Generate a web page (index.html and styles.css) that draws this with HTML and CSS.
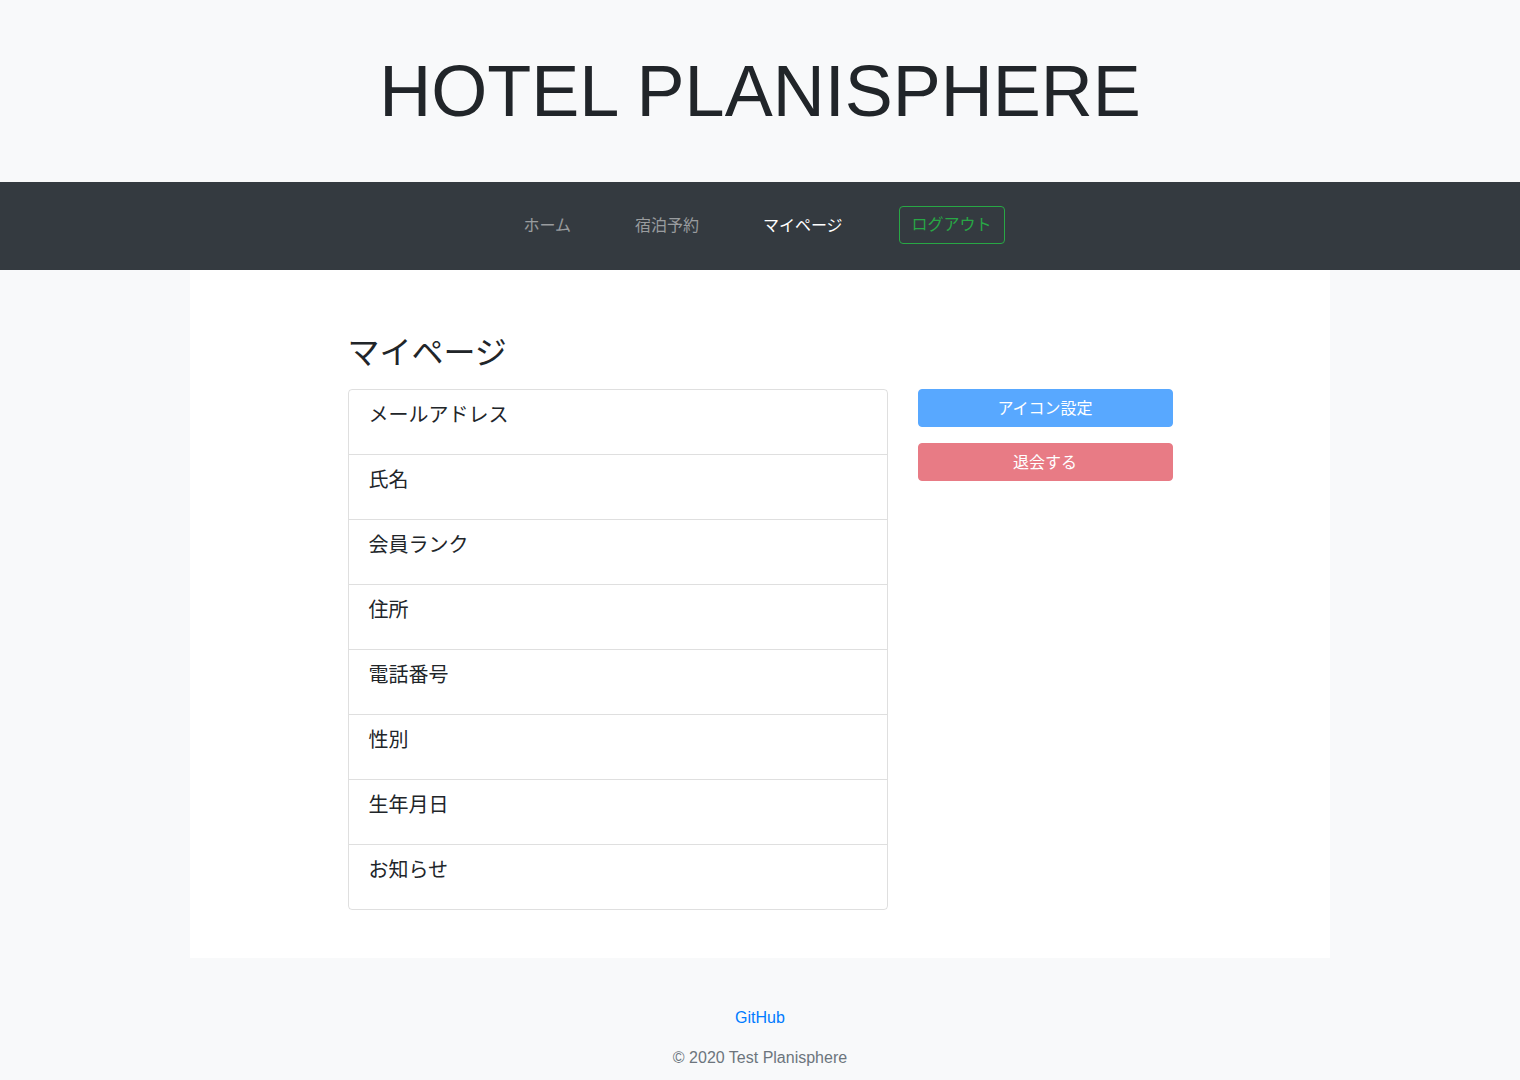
FILE: index.html
```html
<!DOCTYPE html>
<html lang="ja">
<head>
<meta charset="utf-8">
<title>マイページ | HOTEL PLANISPHERE</title>
<link rel="stylesheet" href="styles.css">
</head>
<body>
<header class="jumbotron">
  <h1 class="brand">HOTEL PLANISPHERE</h1>
</header>
<nav class="navbar">
  <ul class="nav-list">
    <li class="nav-item"><a class="nav-link" href="#">ホーム</a></li>
    <li class="nav-item"><a class="nav-link" href="#">宿泊予約</a></li>
    <li class="nav-item"><a class="nav-link active" href="#">マイページ</a></li>
    <li class="nav-item nav-item-btn"><button class="btn-logout" type="button">ログアウト</button></li>
  </ul>
</nav>
<div class="page">
  <main class="main">
    <div class="content">
      <h2 class="page-title">マイページ</h2>
      <div class="row">
        <div class="list-group">
          <div class="list-item"><h5 class="item-label">メールアドレス</h5></div>
          <div class="list-item"><h5 class="item-label">氏名</h5></div>
          <div class="list-item"><h5 class="item-label">会員ランク</h5></div>
          <div class="list-item"><h5 class="item-label">住所</h5></div>
          <div class="list-item"><h5 class="item-label">電話番号</h5></div>
          <div class="list-item"><h5 class="item-label">性別</h5></div>
          <div class="list-item"><h5 class="item-label">生年月日</h5></div>
          <div class="list-item"><h5 class="item-label">お知らせ</h5></div>
        </div>
        <div class="actions">
          <button class="btn btn-primary" type="button" disabled>アイコン設定</button>
          <button class="btn btn-danger" type="button" disabled>退会する</button>
        </div>
      </div>
    </div>
  </main>
</div>
<footer class="footer">
  <a class="footer-link" href="#">GitHub</a>
  <p class="copyright">© 2020 Test Planisphere</p>
</footer>
</body>
</html>
```

FILE: styles.css
```css
* {
  box-sizing: border-box;
}

html, body {
  margin: 0;
  padding: 0;
}

body {
  background: #f8f9fa;
  color: #212529;
  font-family: "Liberation Sans", "Noto Sans CJK JP", sans-serif;
  font-size: 16px;
  line-height: 1.5;
}

.jumbotron {
  background: #f8f9fa;
  padding: 48px 0;
  text-align: center;
}

.brand {
  margin: 0;
  font-size: 72px;
  font-weight: 300;
  line-height: 1.2;
  color: #212529;
}

.navbar {
  background: #343a40;
  height: 88px;
  display: flex;
  align-items: center;
  justify-content: center;
  padding-right: 24px;
  padding-bottom: 2px;
}

.nav-list {
  list-style: none;
  margin: 0;
  padding: 0;
  display: flex;
  align-items: center;
}

.nav-link {
  display: block;
  padding: 8px 32px;
  color: rgba(255, 255, 255, 0.5);
  text-decoration: none;
  line-height: 24px;
  position: relative;
  top: 1px;
}

.nav-link.active {
  color: #fff;
}

.nav-item-btn {
  margin-left: 24px;
}

.btn-logout {
  font-family: inherit;
  font-size: 16px;
  line-height: 24px;
  padding: 6px 12px;
  border: 1px solid #28a745;
  border-radius: 4px;
  background: transparent;
  color: #28a745;
  cursor: pointer;
}

.page {
  display: flex;
  justify-content: center;
}

.main {
  width: 1140px;
  background: #fff;
  padding: 48px 0;
  display: flex;
  justify-content: center;
}

.content {
  width: 825px;
}

.page-title {
  margin: 16px 0;
  font-size: 32px;
  font-weight: 400;
  line-height: 1.2;
}

.row {
  display: grid;
  grid-template-columns: 540px 255px;
  column-gap: 30px;
  align-items: start;
}

.list-group {
  border: 1px solid rgba(0, 0, 0, 0.125);
  border-radius: 4px;
}

.list-item {
  padding: 13px 20px 11px;
  height: 65px;
  border-top: 1px solid rgba(0, 0, 0, 0.125);
}

.list-item:first-child {
  border-top: 0;
  height: 64px;
}

.item-label {
  margin: 0;
  font-size: 20px;
  font-weight: 400;
  line-height: 24px;
}

.actions {
  display: flex;
  flex-direction: column;
  gap: 16px;
}

.btn {
  display: block;
  width: 100%;
  font-family: inherit;
  font-size: 16px;
  line-height: 24px;
  padding: 7px 12px 5px;
  border: 1px solid transparent;
  border-radius: 4px;
  color: #fff;
  opacity: 0.65;
  text-align: center;
}

.btn-primary {
  background: #007bff;
  border-color: #007bff;
}

.btn-danger {
  background: #dc3545;
  border-color: #dc3545;
}

.footer {
  text-align: center;
  padding-top: 48px;
  padding-bottom: 24px;
}

.footer-link {
  display: inline-block;
  color: #007bff;
  text-decoration: none;
  line-height: 24px;
}

.copyright {
  margin: 16px 0 0;
  color: #6c757d;
  line-height: 24px;
}
```
